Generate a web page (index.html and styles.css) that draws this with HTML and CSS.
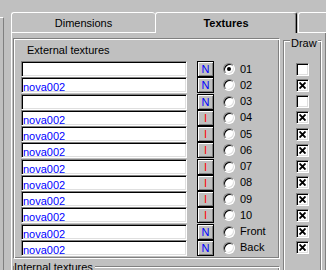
FILE: index.html
```html
<!DOCTYPE html>
<html lang="en">
<head>
    <meta charset="UTF-8">
    <title>Textures</title>
    <link rel="stylesheet" href="styles.css">
</head>
<body>
<div class="screen">
    <div class="stub"></div>
    <div class="tabctl">
        <div class="tabs">
            <div class="tab">Dimensions</div>
            <div class="tab active">Textures</div>
            <div class="tab next"></div>
        </div>
        <div class="page">
            <div class="ext">
                <div class="ext-title">External textures</div>
                <div class="rows">
                    <div class="row"><div class="field"></div><div class="btn n">N</div><div class="radio checked"></div><span class="lbl">01</span></div>
                    <div class="row"><div class="field">nova002</div><div class="btn n">N</div><div class="radio"></div><span class="lbl">02</span></div>
                    <div class="row"><div class="field"></div><div class="btn n">N</div><div class="radio"></div><span class="lbl">03</span></div>
                    <div class="row"><div class="field">nova002</div><div class="btn i">I</div><div class="radio"></div><span class="lbl">04</span></div>
                    <div class="row"><div class="field">nova002</div><div class="btn i">I</div><div class="radio"></div><span class="lbl">05</span></div>
                    <div class="row"><div class="field">nova002</div><div class="btn i">I</div><div class="radio"></div><span class="lbl">06</span></div>
                    <div class="row"><div class="field">nova002</div><div class="btn i">I</div><div class="radio"></div><span class="lbl">07</span></div>
                    <div class="row"><div class="field">nova002</div><div class="btn i">I</div><div class="radio"></div><span class="lbl">08</span></div>
                    <div class="row"><div class="field">nova002</div><div class="btn i">I</div><div class="radio"></div><span class="lbl">09</span></div>
                    <div class="row"><div class="field">nova002</div><div class="btn i">I</div><div class="radio"></div><span class="lbl">10</span></div>
                    <div class="row"><div class="field">nova002</div><div class="btn n">N</div><div class="radio"></div><span class="lbl">Front</span></div>
                    <div class="row"><div class="field">nova002</div><div class="btn n">N</div><div class="radio"></div><span class="lbl">Back</span></div>
                </div>
            </div>
            <div class="draw">
                <div class="group-title">Draw</div>
                <div class="checks">
                    <span class="check"></span>
                    <span class="check on"><svg width="7" height="7" viewBox="0 0 7 7"><path d="M0.5 0.5L6.5 6.5M6.5 0.5L0.5 6.5" stroke="#000" stroke-width="1.9"/></svg></span>
                    <span class="check"></span>
                    <span class="check on"><svg width="7" height="7" viewBox="0 0 7 7"><path d="M0.5 0.5L6.5 6.5M6.5 0.5L0.5 6.5" stroke="#000" stroke-width="1.9"/></svg></span>
                    <span class="check on"><svg width="7" height="7" viewBox="0 0 7 7"><path d="M0.5 0.5L6.5 6.5M6.5 0.5L0.5 6.5" stroke="#000" stroke-width="1.9"/></svg></span>
                    <span class="check on"><svg width="7" height="7" viewBox="0 0 7 7"><path d="M0.5 0.5L6.5 6.5M6.5 0.5L0.5 6.5" stroke="#000" stroke-width="1.9"/></svg></span>
                    <span class="check on"><svg width="7" height="7" viewBox="0 0 7 7"><path d="M0.5 0.5L6.5 6.5M6.5 0.5L0.5 6.5" stroke="#000" stroke-width="1.9"/></svg></span>
                    <span class="check on"><svg width="7" height="7" viewBox="0 0 7 7"><path d="M0.5 0.5L6.5 6.5M6.5 0.5L0.5 6.5" stroke="#000" stroke-width="1.9"/></svg></span>
                    <span class="check on"><svg width="7" height="7" viewBox="0 0 7 7"><path d="M0.5 0.5L6.5 6.5M6.5 0.5L0.5 6.5" stroke="#000" stroke-width="1.9"/></svg></span>
                    <span class="check on"><svg width="7" height="7" viewBox="0 0 7 7"><path d="M0.5 0.5L6.5 6.5M6.5 0.5L0.5 6.5" stroke="#000" stroke-width="1.9"/></svg></span>
                    <span class="check on"><svg width="7" height="7" viewBox="0 0 7 7"><path d="M0.5 0.5L6.5 6.5M6.5 0.5L0.5 6.5" stroke="#000" stroke-width="1.9"/></svg></span>
                    <span class="check on"><svg width="7" height="7" viewBox="0 0 7 7"><path d="M0.5 0.5L6.5 6.5M6.5 0.5L0.5 6.5" stroke="#000" stroke-width="1.9"/></svg></span>
                </div>
            </div>
            <div class="int">
                <div class="int-title">Internal textures</div>
            </div>
        </div>
    </div>
</div>
</body>
</html>
```

FILE: styles.css
```css
* {
    box-sizing: border-box;
}
body {
    margin: 0;
    background-color: #c0c0c0;
    font-family: "Liberation Sans", Arial, sans-serif;
    font-size: 11px;
    color: #000;
    overflow: hidden;
}
.screen {
    display: flex;
    width: 326px;
    height: 270px;
    overflow: hidden;
}
.stub {
    flex: none;
    width: 4px;
    margin-top: 17px;
    border-top: 1px solid #fff;
    border-right: 1px solid #808080;
}
.tabctl {
    flex: none;
    width: 315px;
    margin-left: 7px;
    padding-top: 12px;
}
.tabs {
    display: flex;
    height: 21px;
}
.tab {
    flex: none;
    width: 144px;
    height: 21px;
    display: flex;
    align-items: center;
    justify-content: center;
    border-top: 1px solid #fff;
    border-left: 1px solid #fff;
    border-bottom: 1px solid #fff;
    border-radius: 3px 3px 0 0;
}
.tab.active {
    width: 142px;
    font-weight: bold;
    border-bottom: none;
    border-right: 1px solid #000;
    box-shadow: inset -1px 0 #808080;
}
.tab.next {
    width: 40px;
    margin-left: 1px;
}
.page {
    display: grid;
    grid-template-columns: 267px 39px;
    column-gap: 3px;
    align-items: start;
    height: 237px;
    padding: 5px 1px 0 1px;
    border-left: 1px solid #fff;
    border-right: 1px solid #808080;
}
.ext, .draw, .int {
    border: 1px solid;
    border-color: #808080 #fff #fff #808080;
    box-shadow: inset 1px 1px #fff, inset -1px -1px #808080;
}
.ext {
    height: 221px;
    padding-top: 5px;
}
.ext-title {
    line-height: 13px;
    padding-left: 13px;
}
.rows {
    display: grid;
    grid-template-rows: repeat(12, 1fr);
    height: 195px;
    margin-top: 4px;
}
.row {
    display: flex;
    align-items: center;
    padding-left: 7px;
}
.field {
    width: 166px;
    height: 16px;
    padding: 3px 1px 0;
    line-height: 12px;
    color: #0000ff;
    background: #fff;
    border: 1px solid;
    border-color: #808080 #fff #fff #808080;
    box-shadow: inset 1px 1px #000, inset -1px -1px #dfdfdf;
}
.btn {
    width: 17px;
    height: 16px;
    margin-left: 10px;
    display: flex;
    align-items: center;
    justify-content: center;
    line-height: 12px;
    border: 1px solid #000;
    box-shadow: inset 1px 1px #fff, inset -1px -1px #808080;
}
.btn.n { color: #0000ff; }
.btn.i { color: #ff0000; }
.radio {
    position: relative;
    width: 12px;
    height: 12px;
    margin-left: 9px;
    border-radius: 50%;
    background: #fff;
    border: 1px solid;
    border-color: #808080 #fff #fff #808080;
    box-shadow: inset 1px 1px #000, inset -1px -1px #dfdfdf;
}
.radio.checked::after {
    content: "";
    position: absolute;
    left: 3px;
    top: 3px;
    width: 4px;
    height: 4px;
    border-radius: 50%;
    background: #000;
}
.lbl {
    margin-left: 5px;
    line-height: 13px;
}
.draw {
    grid-row: 1 / 3;
    grid-column: 2;
    height: 240px;
    margin-top: 2px;
}
.group-title {
    width: max-content;
    margin: -4px 0 0 6px;
    padding: 0 1px;
    line-height: 13px;
    background: #c0c0c0;
}
.checks {
    display: grid;
    grid-template-rows: repeat(12, 1fr);
    justify-items: center;
    align-items: center;
    height: 195px;
    margin-top: 11px;
}
.check {
    display: flex;
    align-items: center;
    justify-content: center;
    width: 13px;
    height: 13px;
    background: #fff;
    border: 1px solid;
    border-color: #808080 #fff #fff #808080;
    box-shadow: inset 1px 1px #000, inset -1px -1px #dfdfdf;
}
.int {
    grid-column: 1;
    height: 30px;
    margin-top: 7px;
}
.int-title {
    width: max-content;
    margin-top: -6px;
    padding-right: 2px;
    line-height: 13px;
    background: #c0c0c0;
}
```
